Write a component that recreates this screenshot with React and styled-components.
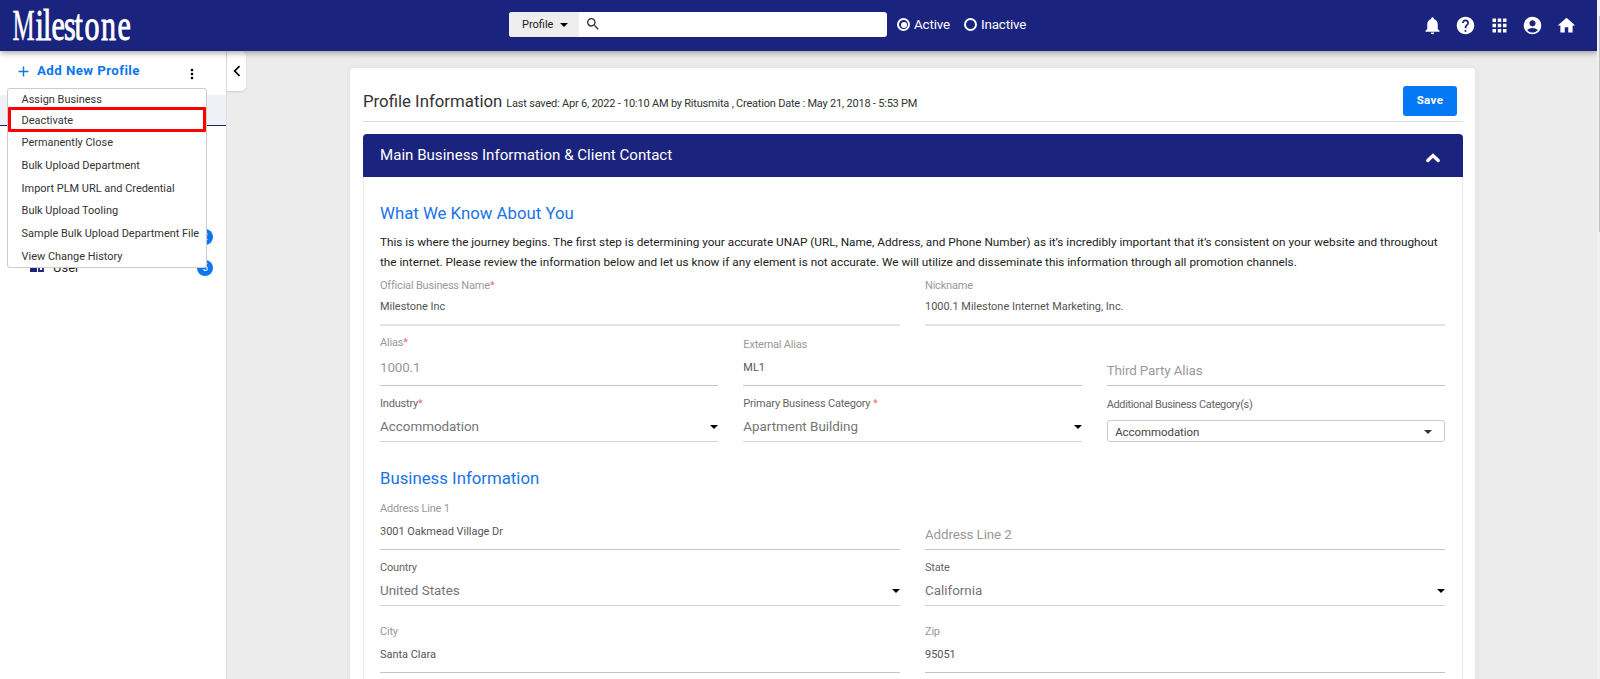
import React from "react";
import styled, { createGlobalStyle } from "styled-components";
import {
  MdNotifications,
  MdHelp,
  MdApps,
  MdAccountCircle,
  MdHome,
  MdSearch,
  MdMoreVert,
  MdAdd,
} from "react-icons/md";

const Global = createGlobalStyle`
  * { box-sizing: border-box; }
  html, body { margin: 0; height: 100%; overflow: hidden; }
  body { background: #ececec; font-family: Roboto, "Liberation Sans", sans-serif; font-size: 11px; color: #333; }
`;

const Page = styled.div`
  position: relative;
  height: 679px;
  width: 1600px;
  padding-right: 3px;
  overflow: hidden;
  background: #ececec;
`;

const TopBar = styled.header`
  position: relative;
  z-index: 3;
  display: flex;
  align-items: flex-start;
  height: 51px;
  background: #1a237e;
  color: #fff;
  box-shadow: 0 2px 6px rgba(0, 0, 0, 0.35);
`;

const Logo = styled.svg`
  display: block;
  width: 140px;
  height: 51px;
`;

const SearchBox = styled.div`
  display: flex;
  width: 378px;
  height: 25px;
  margin: 12px 0 0 369px;
  border-radius: 3px;
  overflow: hidden;
  background: #fff;
`;

const SearchScope = styled.button`
  display: flex;
  align-items: center;
  gap: 7px;
  width: 70px;
  padding: 0 0 0 13px;
  border: 0;
  background: #eee;
  color: #222;
  font: 400 11px Roboto, sans-serif;
`;

const Caret = styled.i`
  border: ${(p) => p.$size || 4}px solid transparent;
  border-top-color: ${(p) => p.$color || "#000"};
  border-bottom: 0;
`;

const SearchIcon = styled(MdSearch)`
  margin: 4px 0 0 6px;
  width: 16px;
  height: 16px;
  color: #333;
`;

const RadioLabel = styled.label`
  display: flex;
  align-items: center;
  gap: 4px;
  margin: 15px 0 0 ${(p) => p.$gap}px;
  height: 18px;
  font-size: 13.4px;
  letter-spacing: -0.15px;
`;

const RadioDot = styled.span`
  width: 13px;
  height: 13px;
  border: 2px solid #fff;
  border-radius: 50%;
  padding: 1.5px;
  background: ${(p) => (p.$on ? "#fff content-box" : "none")};
`;

const Actions = styled.nav`
  display: flex;
  gap: 12.6px;
  margin: 14.5px 20px 0 auto;
  svg { width: 21px; height: 21px; display: block; }
`;

const Body = styled.div`
  display: flex;
  align-items: flex-start;
`;

const Sidebar = styled.aside`
  flex: none;
  width: 227px;
  height: 628px;
  background: #fff;
  border-right: 1px solid #dcdce4;
`;

const AddRow = styled.div`
  display: flex;
  height: 44px;
  padding: 9px 26px 0 15px;
  color: #0b76f0;
  font-size: 13.3px;
  font-weight: 700;
  line-height: 22px;
  letter-spacing: 0.42px;
  svg { display: block; }
`;

const AddIcon = styled(MdAdd)`
  width: 17px;
  height: 17px;
  margin: 3px 5px 0 0;
`;

const MoreIcon = styled(MdMoreVert)`
  width: 16px;
  height: 16px;
  margin: 6px 0 0 auto;
  color: #000;
`;

const ActiveRow = styled.div`
  height: 31px;
  background: #f0f0f7;
  border-bottom: 1px solid #1a237e;
`;

const SideItems = styled.div`
  padding: 95px 13px 0 30px;
`;

const SideItem = styled.div`
  display: flex;
  align-items: center;
  height: 31px;
  font-size: 13px;
  color: #222;
`;

const UserIcon = styled.svg`
  width: 14px;
  height: 14px;
  margin: -5px 9px 0 0;
`;

const CountBadge = styled.span`
  margin-left: auto;
  width: 16px;
  height: 16px;
  border-radius: 50%;
  background: #0b76f0;
  color: #fff;
  font-size: 10px;
  line-height: 16px;
  text-align: center;
`;

const CollapseTab = styled.button`
  flex: none;
  display: flex;
  align-items: center;
  justify-content: center;
  width: 19px;
  height: 40px;
  border: 0;
  padding: 0 0 1px;
  border-radius: 0 5px 5px 0;
  background: #fff;
  box-shadow: 0 1px 2px rgba(0, 0, 0, 0.12);
  svg { width: 8px; height: 12px; }
`;

const Menu = styled.div`
  position: absolute;
  z-index: 4;
  left: 7px;
  top: 88px;
  width: 200px;
  height: 180px;
  background: #fff;
  border: 1px solid #ccc;
  border-radius: 3px;
`;

const MenuList = styled.div`
  display: flex;
  flex-direction: column;
`;

const MenuItem = styled.div`
  flex: none;
  height: 22.7px;
  padding-left: 13.6px;
  line-height: 22px;
  font-size: 10.95px;
  color: #333;
  &:first-child { height: 20.6px; line-height: 21px; }
`;

const Highlight = styled.div`
  position: absolute;
  left: 0;
  top: 18px;
  width: 198px;
  height: 25px;
  border: 3px solid #f00;
  border-radius: 1px;
`;

const Card = styled.main`
  width: 1125px;
  height: 640px;
  margin: 17px 0 0 104px;
  padding: 0 12px 0 13px;
  background: #fff;
  border-radius: 4px;
  box-shadow: 0 0 6px rgba(0, 0, 0, 0.06);
`;

const CardHead = styled.div`
  display: flex;
  height: 54px;
  margin-bottom: 12px;
  padding-right: 6px;
  border-bottom: 1px solid #ddd;
`;

const TitleLine = styled.div`
  display: flex;
  align-items: baseline;
  gap: 4px;
  height: 22px;
  margin-top: 22px;
  line-height: 22px;
  color: #333;
`;

const Title = styled.h1`
  margin: 0;
  font-size: 16.8px;
  font-weight: 400;
`;

const SavedNote = styled.span`
  letter-spacing: -0.21px;
`;

const SaveButton = styled.button`
  margin: 18px 0 0 auto;
  width: 54px;
  height: 30px;
  border: 0;
  border-radius: 3px;
  padding: 0 0 2px;
  background: #0578f5;
  color: #fff;
  font: 700 11.5px Roboto, sans-serif;
  letter-spacing: 0.4px;
`;

const PanelHead = styled.div`
  display: flex;
  justify-content: space-between;
  height: 43px;
  padding: 0 22px 0 17px;
  border-radius: 4px 4px 0 0;
  background: #1a237e;
  color: #fff;
  font-size: 15.1px;
  line-height: 43px;
  svg { width: 16px; height: 12px; margin-top: 18px; }
`;

const Panel = styled.section`
  height: 520px;
  padding: 24px 17px 0 16px;
  border: 1px solid #ebebeb;
  border-top: 0;
`;

const SectionTitle = styled.h2`
  margin: ${(p) => p.$top || 0}px 0 0;
  height: 24px;
  color: #1a73e8;
  font-size: 16.8px;
  font-weight: 400;
  line-height: 24px;
`;

const Intro = styled.p`
  margin: 7px -10px 0 0;
  height: 38px;
  color: #222;
  font-size: 11.77px;
  line-height: 20px;
  white-space: nowrap;
`;

const FormRow = styled.div`
  display: grid;
  grid-template-columns: repeat(${(p) => p.$cols}, 1fr);
  column-gap: 25px;
  height: ${(p) => p.$height}px;
`;

const FieldBox = styled.div`
  display: flex;
  flex-direction: column;
  padding-top: ${(p) => p.$top}px;
  border-bottom: ${(p) => (p.$soft ? "2px solid #e2e2e2" : p.$line === "none" ? "0" : `1px solid ${p.$line || "#c4c4c4"}`)};
`;

const Label = styled.span`
  height: 16px;
  line-height: 16px;
  letter-spacing: ${(p) => p.$tight || -0.2}px;
  color: ${(p) => (p.$dark ? "#666" : "#999")};
`;

const Required = styled.span`
  color: #f27070;
`;

const Value = styled.div`
  display: flex;
  align-items: center;
  justify-content: space-between;
  height: 20px;
  margin-top: ${(p) => p.$gap}px;
  font-size: ${(p) => (p.$large ? 13.4 : 10.95)}px;
  letter-spacing: ${(p) => (p.$muted ? -0.12 : 0)}px;
  line-height: 20px;
  color: ${(p) => (p.$muted ? "#999" : p.$large ? "#757575" : "#555")};
`;

const SelectBox = styled.div`
  display: flex;
  align-items: center;
  justify-content: space-between;
  height: 22px;
  margin-top: 7px;
  padding: 1px 12px 0 7.5px;
  border: 1px solid #ccc;
  border-radius: 3px;
  color: #444;
  font-size: 11.4px;
`;

const ScrollTrack = styled.div`
  position: absolute;
  z-index: 5;
  right: 0;
  top: 0;
  width: 3px;
  height: 679px;
  background: linear-gradient(#c1c1c1, #c1c1c1) 2px 16px / 1px 216px no-repeat #f1f1f1;
`;

function Field({ label, value, required, top, gap, select, large, muted, soft }) {
  return (
    <FieldBox $top={top} $soft={soft} $line={select ? "#d4d4d4" : undefined}>
      {label && (
        <Label $dark={select}>
          {label}
          {required && <Required>*</Required>}
        </Label>
      )}
      <Value $gap={gap} $large={large || select} $muted={muted}>
        {value}
        {select && <Caret />}
      </Value>
    </FieldBox>
  );
}

const menuItems = [
  "Assign Business",
  "Deactivate",
  "Permanently Close",
  "Bulk Upload Department",
  "Import PLM URL and Credential",
  "Bulk Upload Tooling",
  "Sample Bulk Upload Department File",
  "View Change History",
];

export default function App() {
  return (
    <Page>
      <Global />
      <TopBar>
        <Logo viewBox="0 0 140 51" fontFamily="Liberation Serif, serif" fontSize="30" fill="#fff" stroke="#fff">
          <text transform="translate(12.5 40) scale(0.83 1.46)" strokeWidth="0.3">
            M
          </text>
          <text
            transform="translate(0 40) scale(1 1.46)"
            x="35.5 43 51.500 64 74.500 84.500 101 117.500"
            strokeWidth="0.65"
          >
            ilestone
          </text>
        </Logo>
        <SearchBox>
          <SearchScope>
            Profile <Caret $size={4} />
          </SearchScope>
          <SearchIcon />
        </SearchBox>
        <RadioLabel $gap={10}>
          <RadioDot $on />
          Active
        </RadioLabel>
        <RadioLabel $gap={14}>
          <RadioDot />
          Inactive
        </RadioLabel>
        <Actions>
          <MdNotifications />
          <MdHelp />
          <MdApps />
          <MdAccountCircle />
          <MdHome />
        </Actions>
      </TopBar>
      <Body>
        <Sidebar>
          <AddRow>
            <AddIcon />
            Add New Profile
            <MoreIcon />
          </AddRow>
          <ActiveRow />
          <SideItems>
            <SideItem>
              <CountBadge>2</CountBadge>
            </SideItem>
            <SideItem>
              <UserIcon viewBox="0 0 14 14">
                <circle cx="4" cy="5" r="2.8" fill="#1a237e" />
                <path d="M0 14v-3q0-2.500 4-2.500 3 0 3 2.500v3z" fill="#1a237e" />
                <path d="M9 8v5h4V8M10 6h2" fill="none" stroke="#1a237e" strokeWidth="1.800" />
              </UserIcon>
              User
              <CountBadge>5</CountBadge>
            </SideItem>
          </SideItems>
        </Sidebar>
        <CollapseTab>
          <svg viewBox="0 0 8 12">
            <path d="M6.500 1.200 1.700 6l4.800 4.800" fill="none" stroke="#000" strokeWidth="1.700" />
          </svg>
        </CollapseTab>
        <Card>
          <CardHead>
            <TitleLine>
              <Title>Profile Information</Title>
              <SavedNote>
                Last saved: Apr 6, 2022 - 10:10 AM by Ritusmita , Creation Date : May 21, 2018 - 5:53 PM
              </SavedNote>
            </TitleLine>
            <SaveButton>Save</SaveButton>
          </CardHead>
          <PanelHead>
            Main Business Information &amp; Client Contact
            <svg viewBox="0 0 16 12">
              <path d="M2.800 8.500 8 3.500l5.200 5" fill="none" stroke="#fff" strokeWidth="3.400" strokeLinecap="round" />
            </svg>
          </PanelHead>
          <Panel>
            <SectionTitle>What We Know About You</SectionTitle>
            <Intro>
              This is where the journey begins. The first step is determining your accurate UNAP (URL, Name, Address, and Phone Number) as it’s incredibly important that it’s consistent on your website and throughout
              <br />
              the internet. Please review the information below and let us know if any element is not accurate. We will utilize and disseminate this information through all promotion channels.
            </Intro>
            <FormRow $cols={2} $height={56}>
              <Field label="Official Business Name" required value="Milestone Inc" top={8} gap={3} soft />
              <Field label="Nickname" value="1000.1 Milestone Internet Marketing, Inc." top={8} gap={3} soft />
            </FormRow>
            <FormRow $cols={3} $height={60}>
              <Field label="Alias" required value="1000.1" top={9} gap={7} large muted />
              <Field label="External Alias" value="ML1" top={11} gap={5} />
              <Field value="Third Party Alias" top={35} gap={0} large muted />
            </FormRow>
            <FormRow $cols={3} $height={56}>
              <Field label="Industry" required value="Accommodation" top={10} gap={5} select />
              <Field label="Primary Business Category " required value="Apartment Building" top={10} gap={5} select />
              <FieldBox $top={11} $line="none">
                <Label $dark $tight={-0.36}>
                  Additional Business Category(s)
                </Label>
                <SelectBox>
                  Accommodation <Caret $size={4} $color="#333" />
                </SelectBox>
              </FieldBox>
            </FormRow>
            <SectionTitle $top={24}>Business Information</SectionTitle>
            <FormRow $cols={2} $height={60}>
              <Field label="Address Line 1" value="3001 Oakmead Village Dr" top={11} gap={5} />
              <Field value="Address Line 2" top={35} gap={0} large muted />
            </FormRow>
            <FormRow $cols={2} $height={56}>
              <Field label="Country" value="United States" top={10} gap={5} select />
              <Field label="State" value="California" top={10} gap={5} select />
            </FormRow>
            <FormRow $cols={2} $height={67}>
              <Field label="City" value="Santa Clara" top={18} gap={5} />
              <Field label="Zip" value="95051" top={18} gap={5} />
            </FormRow>
          </Panel>
        </Card>
      </Body>
      <Menu>
        <MenuList>
          {menuItems.map((item) => (
            <MenuItem key={item}>{item}</MenuItem>
          ))}
        </MenuList>
        <Highlight />
      </Menu>
      <ScrollTrack />
    </Page>
  );
}
